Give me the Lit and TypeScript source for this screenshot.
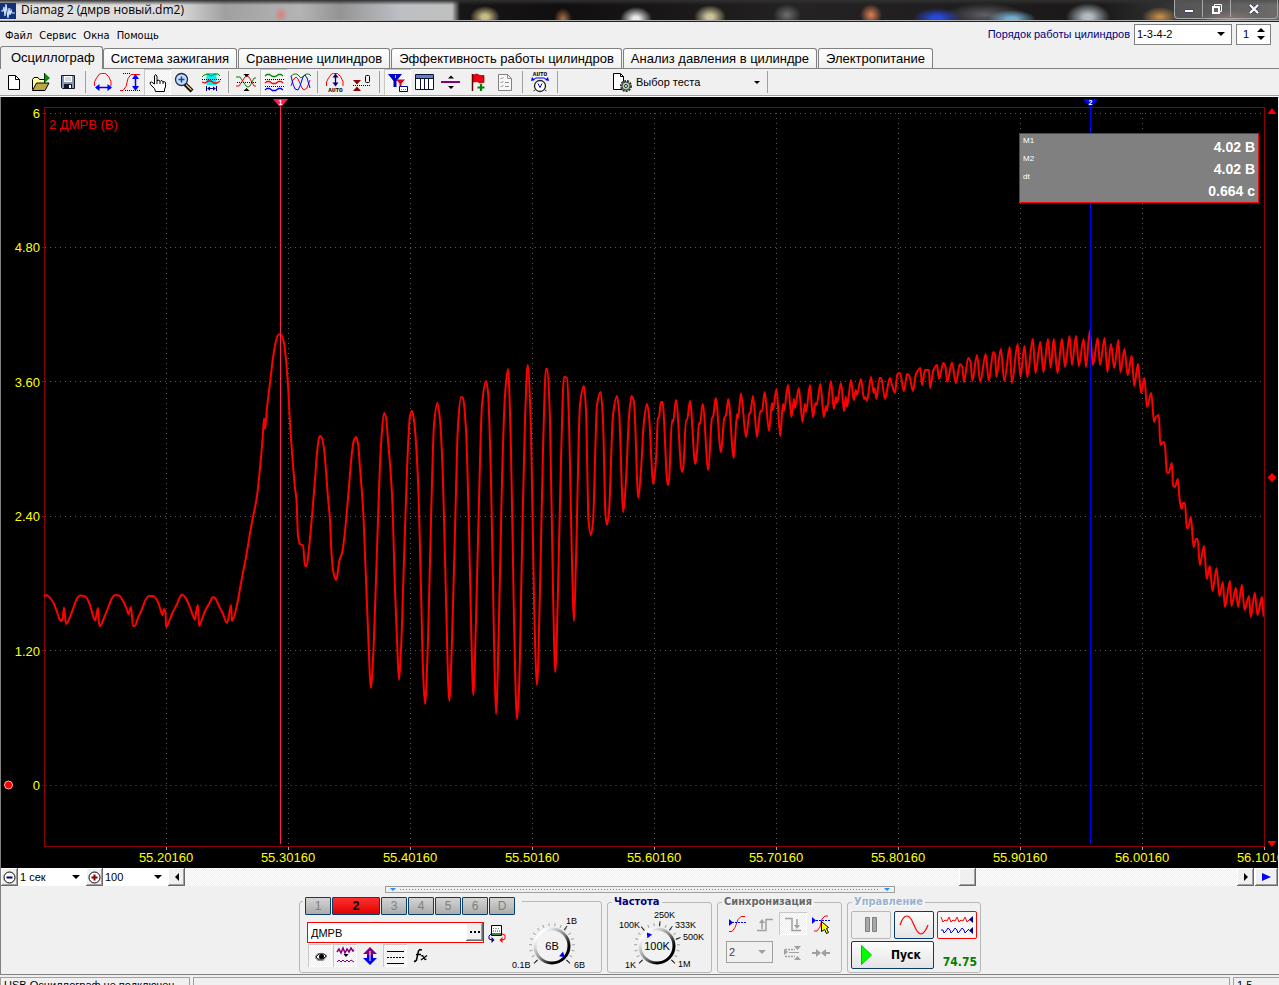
import { LitElement, html, svg, css } from "lit";
import { customElement, property } from "lit/decorators.js";
import { classMap } from "lit/directives/class-map.js";

/* ---------- signal ---------- */

// Sample turning points, x/y pairs in the plot's own coordinate space.
const SIGNAL: number[] = [
  44,596, 46,595, 48,596, 51,599, 54,604, 57,612, 59.5,619, 61,621, 62.5,619, 64,607.5, 66,624, 69,619, 73,609, 77,598.5, 80,595.5,
  84,596, 87,598.5, 90,605, 93,616, 95,620.5, 96,617, 98,608, 99,623, 100,626, 104,618, 108,608, 112,598, 115,595, 119,595.5,
  123,601, 127,610, 128.5,614, 131,607, 133,626, 134.5,626, 138,618, 142,609, 146,599, 149,596, 153,596, 157,600, 160,608,
  162.5,615, 164,609, 165.5,612, 166,627, 168,624, 172,614, 177,604, 180,597, 182,594.5, 185,597, 189,605, 192,613, 195,619.5,
  196.5,610, 198,605, 199,626, 201,622, 205,611, 210,602, 213,597, 215,598, 219,606, 223,614, 227,623, 228.5,618, 231,605,
  232,621, 234,617, 238,600, 241,583, 246,557, 252,522, 257,496, 260,468, 262.5,440, 264,418.5, 265,429, 267,408, 270,383,
  273,358, 276,341, 278.5,334.5, 281,334.5, 284,343, 286,360, 288,385, 290,423, 292,452, 295,488, 296.5,500, 298,536, 300,544,
  303,545.5, 305,566, 306.5,566, 309,548, 312,516, 315,480, 317,453, 319,438, 320,436, 322,438, 324,449, 326,471, 328,498,
  330,520, 331.5,553, 333,570, 336,580, 337,577, 339.5,560, 342,553, 344,540, 347,510, 350,474, 352,452, 354,440, 356,437,
  358,443, 360,468, 363,508, 366,580, 368,630, 371,688, 373,660, 376,580, 379,490, 381,445, 384,413, 386,417, 388,440, 392,494,
  395,590, 397,640, 399,680, 401,650, 404,560, 407,470, 410,416, 412,411, 414,420, 418,480, 421,590, 423,670, 425,704, 428,640,
  431,520, 434,425, 437.3,403, 440,420, 443,480, 446,600, 449.3,701, 452,640, 455,530, 458,425, 461,397, 463,398, 466,430,
  469,530, 471,620, 473.3,695, 476,620, 479,500, 482,405, 486,381, 488,392, 491,480, 494,640, 496,714, 499,620, 502,480,
  505,395, 508,369, 511,450, 514,620, 517,719, 519,690, 522,550, 525,420, 527.7,365, 531,430, 534,600, 537,685, 540,590,
  543,450, 546,369, 547.5,369, 550,420, 553,590, 555.3,672, 558,590, 561,460, 564,377, 567,378, 569,420, 571.5,540, 574,621,
  576,560, 580,405, 584,386, 586,410, 588.5,520, 591,535, 593,522, 597,405, 600.7,392, 603,420, 605.5,515, 607,525, 609,512,
  613,415, 617,396, 619,410, 623.3,512, 626,480, 629,417, 631.5,396, 634,402, 638.3,498, 641,470, 644,421, 647,404, 649,416,
  653.3,484, 656,460, 658,418, 659,417, 661,402, 662.5,402, 667.7,485, 669,480, 672,420, 673,422, 676,400, 682,472, 683.5,465,
  686,420, 687,420, 690,401, 695.3,464, 697,452, 699,423, 700,424, 702.7,404, 708.3,470, 712,418, 713,417, 715.7,398, 721,452,
  724.3,418, 726,415, 728.3,399, 733.7,458, 737,414, 738,418, 741,393.5, 746,437, 749.3,414, 750.5,412, 753,396, 757,437,
  760.3,411, 762,411, 764.7,392, 769,431, 772,403, 772.8,410, 776.5,389, 780.2,436, 783,404, 784,411, 788,385, 791.5,417,
  794,399, 795,408, 798.8,388, 802.5,422, 805,404, 806,412, 810,385, 812.9,417, 815.6,403, 816.6,405, 820.4,384, 823.8,417,
  826,406, 826.8,411, 831,381, 833.8,409, 836,397, 837,403, 841,383, 844,411, 845.8,397, 847,407, 851,380, 853.7,400,
  855.8,390, 856.8,395, 861,379, 864,399, 865.3,397, 867,401, 871,377, 873.7,393, 874.7,388, 876.4,399, 879.5,378, 881.2,378,
  885,399, 889.8,378, 892,385, 895,393, 897.4,374, 899.8,373, 904,391, 907,374, 909.4,376, 912.9,391, 916,374, 920.4,368,
  922,385, 925,370, 929,370, 930,388, 933.5,370, 937,365, 939,379, 943.4,363, 945.5,367, 947.2,382, 952,362.5, 955.8,383,
  960,364, 962.3,367, 964,382, 968.2,358, 970.6,362, 972.3,381, 977,355, 980.2,382, 985.7,354, 988.8,381, 993.3,352, 995,355,
  996.4,377, 1000.8,349, 1004.3,381, 1009.8,347, 1011.8,383, 1017.7,344, 1020.4,377, 1024.5,346, 1027.3,377, 1032.8,339,
  1035.5,373, 1040.3,342, 1043.4,372, 1048,339, 1050.7,368, 1053.7,339, 1057.5,373, 1062,339, 1065,367, 1069.6,336, 1072,365,
  1076,336, 1078.8,366, 1083.6,339, 1086,367, 1089.8,331, 1093,365, 1097.7,338, 1100,365, 1104.6,338, 1107.4,372, 1111,344,
  1114.2,368, 1118.4,340, 1120.4,372, 1124.5,349, 1127.6,375, 1131.8,356, 1134.2,386, 1138,364, 1141,393, 1144.5,378,
  1146.9,407, 1151.3,393, 1154,422, 1156,417, 1158.9,415, 1160.3,445, 1163.4,442, 1165,446, 1166.8,472, 1168.5,473, 1172,463,
  1173,485, 1175,487, 1177.8,479, 1179.9,502, 1181.6,509, 1183,503, 1185,503, 1186.7,528, 1188,528, 1190.9,517, 1193.6,547,
  1196,539, 1197.7,539, 1199.8,565, 1204,546, 1206.7,579, 1209.8,566, 1212.5,591, 1216.6,568, 1219.4,596, 1222.8,582,
  1224.9,607, 1230,581, 1231.4,606, 1235.9,588, 1238,607, 1242,585, 1244.5,610, 1249,596, 1250.7,617, 1254.8,593, 1257.5,615,
  1262,597, 1263.7,617,
];

// Monotone cubic path: flat at every crest and trough, no overshoot between.
function smoothPath(flat: number[]): string {
  const n = flat.length / 2;
  const px = (i: number) => flat[2 * i];
  const py = (i: number) => flat[2 * i + 1];
  const slope = (i: number) => (py(i + 1) - py(i)) / (px(i + 1) - px(i));
  const tangent = (i: number) => {
    if (i === 0 || i === n - 1) return 0;
    const a = slope(i - 1);
    const b = slope(i);
    return a * b <= 0 ? 0 : (2 * a * b) / (a + b);
  };
  let d = `M${px(0)} ${py(0)}`;
  for (let i = 0; i < n - 1; i++) {
    const h = (px(i + 1) - px(i)) / 3;
    d += `C${(px(i) + h).toFixed(1)} ${(py(i) + h * tangent(i)).toFixed(1)} ${(px(i + 1) - h).toFixed(1)} ${(
      py(i + 1) - h * tangent(i + 1)
    ).toFixed(1)} ${px(i + 1)} ${py(i + 1)}`;
  }
  return d;
}

const pct = (v: number) => `${(v * 100).toFixed(3)}%`;
const Y_TICKS = ["6", "4.80", "3.60", "2.40", "1.20", "0"];
const X_TICKS = [
  "55.20160", "55.30160", "55.40160", "55.50160", "55.60160",
  "55.70160", "55.80160", "55.90160", "56.00160", "56.10160",
];

@customElement("scope-chart")
export class ScopeChart extends LitElement {
  static styles = css`
    :host { display: block; position: relative; background: #000; overflow: hidden; }
    .canvas { position: absolute; inset: 0; width: 100%; height: 100%; font: 13px "Liberation Sans", sans-serif; }
    .plot { width: calc(100% - 57px); height: calc(100% - 32px); overflow: visible; }
    .crisp { shape-rendering: crispEdges; }
    .frame { fill: none; stroke: #8b0000; }
    .grid { stroke: #5a5a5a; stroke-dasharray: 1 4; }
    .zero { stroke: #8b0000; stroke-dasharray: 2 3; }
    .tick { stroke: #8b0000; }
    .xtick { stroke: #a0a0a0; }
    .axis { fill: #ff0; }
    .name { fill: #e80000; }
    .wave { fill: none; stroke: #f00; stroke-width: 2; stroke-linejoin: round; vector-effect: non-scaling-stroke; }
    .m1 { fill: #ff2058; }
    .m2 { fill: #00f; }
    .flag { font: bold 7px "Liberation Sans", sans-serif; fill: #fff; text-anchor: middle; }
    .readout {
      position: absolute; top: 36px; right: 19px; width: 240px; height: 70px; box-sizing: border-box;
      display: flex; justify-content: space-between; padding: 2px 3px;
      background: #808080; border: 1px solid #f00; color: #fff; font-family: "Liberation Sans", sans-serif;
    }
    .names { font-size: 8px; line-height: 18px; margin-top: -4px; }
    .values { font-size: 14px; font-weight: bold; line-height: 22px; text-align: right; }
  `;

  render() {
    const yOf = (i: number) => pct((6 + i * 134.4) / 739);
    const marker = (n: string, at: number) => svg`
      <svg x=${pct(at / 1220)} width="1" height="100%" overflow="visible">
        <rect class="m${n} crisp" x="0" y="-2" width="1" height="100%" />
        <path class="m${n}" d="M-7-8H8L2-1h-3z" />
        <text class="flag" x="0.500" y="-2">${n}</text>
      </svg>`;
    return html`
      <svg class="canvas">
        <circle cx="7.5" cy="688" r="4" fill="#f00" stroke="#ffb0b0" />
        <svg class="plot" x="43" y="10">
          <g class="crisp">
            ${X_TICKS.map((_, i) => svg`
              <line class="grid" x1=${pct((i + 1) / 10)} x2=${pct((i + 1) / 10)} y1="6" y2="100%" />`)}
            ${Y_TICKS.map((t, i) => svg`
              <line class=${t === "0" ? "zero" : "grid"} x1="1" x2="100%" y1=${yOf(i)} y2=${yOf(i)} />
              <line class="tick" x1="-2" x2="0" y1=${yOf(i)} y2=${yOf(i)} />`)}
            <rect class="frame" x="0" y="0" width="100%" height="100%" />
          </g>
          ${Y_TICKS.map((t, i) => svg`<text class="axis" x="-4" y=${yOf(i)} dy="5" text-anchor="end">${t}</text>`)}
          ${X_TICKS.map((t, i) => svg`
            <svg x=${pct((i + 1) / 10)} y="100%" overflow="visible">
              <line class="xtick crisp" x1="0" x2="0" y1="1" y2="4" />
              <text class="axis" x="0" y="16" text-anchor="middle">${t}</text>
            </svg>`)}
          <text class="name" x="5" y="22">2 ДМРВ (В)</text>
          <svg width="100%" height="100%" viewBox="44 107 1220 739" preserveAspectRatio="none">
            <path class="wave" d=${smoothPath(SIGNAL)} />
          </svg>
          ${marker("1", 236)} ${marker("2", 1046)}
          <svg x="100%" y="0" overflow="visible"><path d="M3.500 7l4.500-6 4.500 6z" fill="#f00" /></svg>
          <svg x="100%" y="50%" overflow="visible"><path d="M3.500 1L8-3.500 12.500 1 8 5.500z" fill="#f00" /></svg>
          <svg x="100%" y="100%" overflow="visible"><path d="M3.500-5l4.500 6 4.500-6z" fill="#f00" /></svg>
        </svg>
      </svg>
      <div class="readout">
        <div class="names"><div>M1</div><div>M2</div><div>dt</div></div>
        <div class="values"><div>4.02 В</div><div>4.02 В</div><div>0.664 с</div></div>
      </div>
    `;
  }
}

/* ---------- knob ---------- */

type Mark = { angle: number; text: string; x: number; y: number };

@customElement("scope-knob")
export class ScopeKnob extends LitElement {
  @property({ attribute: false }) marks: Mark[] = [];
  @property() value = "";
  @property() label = "";
  @property({ type: Number }) pointer = 0;

  static styles = css`
    :host { display: block; width: 98px; height: 62px; }
    .dial { display: block; width: 100%; height: 100%; overflow: visible; font: 9px "Liberation Sans", sans-serif; }
    .value { font-size: 11px; text-anchor: middle; }
  `;

  render() {
    const minors = Array.from({ length: 18 }, (_, i) => 136 + (i * 268) / 17);
    return html`
      <svg class="dial" viewBox="-49 -38 98 62" role="slider" aria-label=${this.label} aria-valuetext=${this.value}>
        <defs>
          <linearGradient id="rim" x1="0.15" y1="0.15" x2="0.85" y2="0.85">
            <stop offset="0" stop-color="#fff" /><stop offset="0.5" stop-color="#8a8a8a" /><stop offset="0.85" stop-color="#000" />
          </linearGradient>
        </defs>
        ${minors.map((a) => svg`<line x1="20" x2="23" transform="rotate(${a})" stroke="#a0a0a0" />`)}
        ${this.marks.map((m) => svg`
          <line x1="20" x2="25" transform="rotate(${m.angle})" stroke="#202020" />
          <text x=${m.x} y=${m.y}>${m.text}</text>`)}
        <circle r="17" fill="#f2f2f2" stroke="url(#rim)" stroke-width="3" />
        <path d="M17 0l-5-3v6z" fill="#00f" transform="rotate(${this.pointer})" />
        <text class="value" y="4">${this.value}</text>
      </svg>
    `;
  }
}

/* ---------- icons ---------- */

// One gentle wave across a toolbar icon.
const wave = (y: number, c: string) =>
  svg`<path d="M5 ${y + 1}l2-1.500h2.500l3 2h3l3-2H21l2 1.500" fill="none" stroke=${c} stroke-width="1.300" />`;
const dots = (x1: number, x2: number, y: number) =>
  svg`<path d="M${x1} ${y}H${x2}" stroke="#000" stroke-dasharray="1 1" />`;

const TOOL_ICONS: Record<string, unknown> = {
  new: svg`<path d="M7.500 6.500h7l4 4v10h-11z" fill="#fff" stroke="#000" /><path d="M14.500 6.500v4h4" fill="none" stroke="#000" />`,
  open: svg`<path d="M4.500 20.500v-10l1.500-2h4l1.500 2h5v4" fill="#ffffa0" stroke="#000" /><path d="M4.500 21.500l4-7.500h12.500l-4 7.500z" fill="#b8a848" stroke="#000" /><path d="M16.500 4l5.500 5-5.500 5z" fill="#0a8a0a" /><path d="M16.500 4v10" stroke="#003c00" />`,
  save: svg`<path d="M6.500 6.500h13v13h-12l-1-1z" fill="#8a96b8" stroke="#101828" /><path d="M9 7h8v6H9z" fill="#fff" /><path d="M10 9h6M10 11h6" stroke="#b0b0c0" /><path d="M9 15h8v5H9z" fill="#101828" /><path d="M14 16h2v3h-2z" fill="#fff" />`,
  period: svg`<path d="M4.500 17v-4l2-4 3-4 2-.5h4l3 3 2.500 5V17" fill="none" stroke="#f00" /><path d="M6 18.500h15" stroke="#00f" stroke-width="1.500" /><path d="M9.500 15v7L5 18.500zM17.500 15v7l4.500-3.500z" fill="#00f" />`,
  edge: svg`<path d="M3 21.500h3l3-4 2-8 3-4h9" fill="none" stroke="#f00" />${dots(6, 14, 4.5)}${dots(8, 23, 21.5)}<path d="M18.500 7v13" stroke="#00f" stroke-width="1.500" /><path d="M15 10l3.500-5 3.500 5zM15 17l3.500 5 3.500-5z" fill="#00f" />`,
  hand: svg`<path d="M11.500 22.500l-1-3-4-4-.5-2 1.500-.5 3 2V7l1-1.500L13 7v5l1-1 1.500.5.500 1 1-1 1.500.5.500 1 1-.5 1.500 1V18l-1 2v2.500z" fill="#fff" stroke="#000" /><path d="M13 12v3M16 12.500V15M19 13v2" stroke="#000" />`,
  lens: svg`<path d="M14 15l7 7" stroke="#000" stroke-width="4" /><path d="M15 15.500l5.500 5.500" stroke="#f0c070" stroke-width="1.500" /><circle cx="10.500" cy="10.500" r="6" fill="#c4dcf8" stroke="#1c3050" stroke-width="1.300" /><path d="M10.500 7.500v6M7.500 10.500h6" stroke="#1040c0" stroke-width="1.500" />`,
  window: svg`<path d="M8.500 4h10v12h-10z" fill="#00f0f8" />${dots(4, 23, 10.5)}<path d="M4 8l2-2 4-1 3 2 4-2h3l2 2" fill="none" stroke="#080" /><path d="M4 13l3 1 3-2h3l3 2h3l3-2" fill="none" stroke="#f00" stroke-width="1.300" /><path d="M8.500 17v5M18.500 17v5M10 19.500h7" stroke="#000080" /><path d="M12 17.500v4L9 19.500zM15 17.500v4l3-2z" fill="#000080" />`,
  cross: svg`<path d="M3 8h4l6 9 2 1 2-1 4-8h2" fill="none" stroke="#080" /><path d="M3 17h3l6-9 2-1 2 1 5 9h2" fill="none" stroke="#f00" />${dots(4, 23, 13.5)}<path d="M10.500 5h6l-3 3zM10.500 22h6l-3-3z" fill="#000" />`,
  stack: svg`${wave(6, "#080")}${dots(5, 24, 10.5)}${wave(13, "#f00")}${dots(5, 24, 17.5)}${wave(20, "#00f")}`,
  overlay: svg`<path d="M4 7l3-2h3l4 4 5-4h3l2 2" fill="none" stroke="#080" /><path d="M4 17l2-6 3-3 2 2 4 9 2 2 3-2 3-8" fill="none" stroke="#f00" /><path d="M4 7l2 8 2 5 3 1 2-4 3-9 2-2 2 3 3 10" fill="none" stroke="#00f" />`,
  auto: svg`<path d="M4.500 17v-4l2-4 3-4 2-.5h4l3 3 2.500 5V17" fill="none" stroke="#f00" /><path d="M13.500 6v9" stroke="#000080" stroke-width="1.300" /><path d="M10.500 8.500l3-4 3 4zM10.500 13.500l3 4 3-4z" fill="#000080" /><text class="pix" x="13.500" y="22.500">AUTO</text>`,
  zero: svg`<path d="M4 11h8l-4 4.500z" fill="#8b0000" /><path d="M4 22h8l-4-4.500z" fill="#8b0000" />${dots(4, 22, 16.5)}<rect x="16.500" y="6.500" width="4" height="7" rx="1" fill="none" stroke="#000" />`,
  funnel: svg`<path d="M4 5h14l-5.500 7v6h-3v-6z" fill="#00c" /><path d="M11.500 6v3" stroke="#a0c0ff" /><path d="M12 10.500h9l-3.500 4v3h-2v-3z" fill="#e00020" /><path d="M15.500 17.500h8v5h-8z" fill="#fff" stroke="#000080" /><path d="M17 20.500h5" stroke="#808080" stroke-dasharray="1 1" />`,
  table: svg`<path d="M4.500 5.500h18v15h-18z" fill="#fff" stroke="#101030" /><path d="M5 6h17v3H5z" fill="#6080c0" /><path d="M4.500 9.500h18M9.500 9v11M13.500 9v11M17.500 9v11" stroke="#101030" />`,
  level: svg`<path d="M3 13h19" stroke="#800080" stroke-width="2" /><path d="M10 9.500h6l-3-3zM10 17h6l-3 3z" fill="#000" />`,
  flag: svg`<path d="M7.500 5v17" stroke="#600000" stroke-width="1.500" /><path d="M8 6l4-1 3 1.500h4v7l-4 .5-3-1.500-4 .5z" fill="#f00010" stroke="#700" stroke-width=".7" /><path d="M16 15v7M12.500 18.500h7" stroke="#008000" stroke-width="2.200" />`,
  check: svg`<path d="M6.500 5.500h9l4 4v12h-13z" fill="#f8f8f8" stroke="#808080" /><path d="M15.500 5.500v4h4M8.500 9l1 1 2-2M8.500 13l1 1 2-2M8.500 17l1 1 2-2M13 13.500h4M13 17.500h4" fill="none" stroke="#909090" />`,
  autov: svg`<text class="pix" x="13" y="7">AUTO</text><path d="M6 11l3-2h8l3 2" fill="none" stroke="#00f" /><path d="M4 12l1-4 3 3zM22 12l-1-4-3 3z" fill="#00f" /><circle cx="13" cy="17" r="5.500" fill="#fff" stroke="#222" stroke-width="1.300" /><path d="M8 21l-1.500 1M18 21l1.500 1" stroke="#222" /><path d="M11 14.500l2 4 2-4" fill="none" stroke="#00f" />`,
};

type Tool = { id: string; title: string; down?: boolean } | null;
const TOOLS: Tool[] = [
  { id: "new", title: "Новый" }, { id: "open", title: "Открыть" }, { id: "save", title: "Сохранить" }, null,
  { id: "period", title: "Период" }, { id: "edge", title: "Размах" }, { id: "hand", title: "Рука", down: true },
  { id: "lens", title: "Лупа" }, { id: "window", title: "Окно" }, null,
  { id: "cross", title: "Совместить" }, { id: "stack", title: "Разделить", down: true }, { id: "overlay", title: "Наложить" }, null,
  { id: "auto", title: "Авто" }, { id: "zero", title: "Ноль" }, null,
  { id: "funnel", title: "Маркеры", down: true }, { id: "table", title: "Таблица" }, { id: "level", title: "Уровень" },
  { id: "flag", title: "Флаг" }, { id: "check", title: "Список" }, null,
  { id: "autov", title: "Автонастройка" }, null,
];

const TABS = [
  "Осциллограф", "Система зажигания", "Сравнение цилиндров",
  "Эффективность работы цилиндров", "Анализ давления в цилиндре", "Электропитание",
];

const VOLT_MARKS: Mark[] = [
  { angle: 136, text: "0.1В", x: -40, y: 22 },
  { angle: -53, text: "1В", x: 14, y: -22 },
  { angle: 44, text: "6В", x: 22, y: 22 },
];
const FREQ_MARKS: Mark[] = [
  { angle: 136, text: "1K", x: -32, y: 22 },
  { angle: 231, text: "100K", x: -38, y: -18 },
  { angle: 277, text: "250K", x: -3, y: -28 },
  { angle: 308, text: "333K", x: 18, y: -18 },
  { angle: 340, text: "500K", x: 26, y: -6 },
  { angle: 44, text: "1M", x: 21, y: 21 },
];

@customElement("app-root")
export class AppRoot extends LitElement {
  static styles = css`
    :host {
      display: flex; flex-direction: column; height: 100vh; overflow: hidden;
      background: #f0f0f0; color: #000; font: 11px "Liberation Sans", Arial, sans-serif;
    }
    * { box-sizing: border-box; }
    button, input, select { font: inherit; color: inherit; margin: 0; padding: 0; border-radius: 0; }
    button { background: none; border: 0; display: grid; place-items: center; }
    svg { display: block; }

    .title {
      flex: none; height: 22px; display: flex; align-items: flex-start; justify-content: space-between;
      border-bottom: 1px solid #202020; box-shadow: inset 0 -1px #b0b0b0;
      background:
        radial-gradient(15px 11px at 485px 17px, #c8bc84 20%, transparent),
        radial-gradient(9px 11px at 563px 19px, #a06840 10%, transparent),
        radial-gradient(16px 12px at 636px 19px, #e8e8e8 20%, transparent),
        radial-gradient(16px 12px at 710px 17px, #ccc498 20%, transparent),
        radial-gradient(14px 11px at 787px 15px, #686868 10%, transparent),
        radial-gradient(11px 11px at 871px 15px, #d07850 10%, transparent),
        radial-gradient(24px 10px at 937px 18px, #2848d8 20%, transparent),
        radial-gradient(24px 9px at 1012px 19px, #70b0d0 20%, transparent),
        radial-gradient(40px 12px at 985px 15px, #606068, transparent),
        radial-gradient(22px 14px at 1088px 17px, #b0b8c0 20%, transparent),
        radial-gradient(18px 10px at 1160px 17px, #c08848 10%, transparent),
        radial-gradient(30px 10px at 1230px 20px, #c08878, transparent),
        radial-gradient(7px 9px at 281px 15px, #d88080, transparent),
        linear-gradient(#303030, transparent 5px),
        linear-gradient(90deg, #e4e4e4 0, #d8d8d8 180px, #a0a0a0 225px, #b4b4b4 300px, #949494 340px, #bcc0c4 400px, #c0c0c0 452px, #181616 460px, #100e0e 560px, #242222 800px, #1a1818 1100px, #383838 1180px, #706864);
    }
    .caption { display: flex; align-items: center; gap: 5px; font: 12px/20px "Open Sans", sans-serif; }
    .winbtns { display: flex; height: 19px; margin-right: 1px; border: 1px solid #a8a8a8; border-top: 0; border-radius: 0 0 4px 4px; background: rgba(110, 110, 112, 0.55); }
    .winbtns button { width: 28px; height: 17px; border-right: 1px solid #a8a8a8; }
    .winbtns .close { width: 46px; border-right: 0; }

    .menubar { flex: none; height: 24px; display: flex; align-items: center; padding: 0 8px 0 5px; }
    .menu { display: flex; gap: 7px; margin: 0; padding: 2px 0 0; flex: 1; font: 11px "DejaVu Sans Condensed", sans-serif; }
    .order { display: flex; align-items: center; gap: 4px; color: #000080; }
    .combo { display: grid; align-items: center; background: #fff; color: #000; }
    .combo > * { grid-area: 1 / 1; }
    .combo::after { content: ""; grid-area: 1 / 1; justify-self: end; margin-right: 6px; border: 4px solid transparent; border-top-color: #000; border-bottom: 0; pointer-events: none; }
    .combo select { appearance: none; border: 0; outline: 0; background: transparent; width: 100%; height: 100%; padding-left: 2px; }
    .boxed { border: 1px solid #808080; height: 21px; }
    .boxed.wide { width: 98px; }
    .boxed.dim { width: 47px; height: 22px; border-color: #a0a0a0; background: #f0f0f0; color: #404040; }
    .boxed.dim::after { border-top-color: #a0a0a0; }
    .spin { display: flex; align-items: center; width: 35px; height: 21px; padding-left: 6px; border: 1px solid #808080; background: #fff; color: #000; }
    .spin input { width: 14px; border: 0; outline: 0; background: none; }
    .spin .arrows { display: grid; gap: 4px; }

    .tabs { flex: none; height: 23px; display: flex; align-items: flex-end; gap: 1px; border-bottom: 1px solid #808080; }
    .tabs button { height: 20px; padding: 0 7px; border: 1px solid #808080; border-bottom: 0; border-radius: 3px 3px 0 0; background: linear-gradient(#fff, #f0f0f0); font-size: 13px; white-space: nowrap; }
    .tabs .on { height: 23px; padding: 0 7px 2px 10px; margin: 0 -1px -1px 0; background: #f0f0f0; }

    .tools { flex: none; height: 28px; display: flex; padding-left: 1px; border-bottom: 1px solid #fff; box-shadow: inset 0 -1px #a0a0a0; }
    .tool { width: 27px; height: 26px; }
    .down { background: repeating-conic-gradient(#fff 0 25%, #ececec 0 50%) 0 0 / 2px 2px; box-shadow: inset 1px 1px #c8c8c8, inset -1px -1px #fff; }
    .pix { font: bold 6px "Liberation Mono", monospace; text-anchor: middle; }
    .sep { width: 8px; padding: 2px 0 2px 3px; }
    .sep::before { content: ""; display: block; width: 1px; height: 22px; background: #a0a0a0; }
    .test { display: flex; align-items: center; width: 202px; padding-left: 50px; gap: 3px; height: 26px; }
    .test .drop { margin: 0 4px 0 auto; }

    .page { flex: 1; min-height: 0; display: flex; flex-direction: column; border-left: 1px solid #808080; border-bottom: 1px solid #808080; }
    scope-chart { flex: 1; min-height: 0; margin-right: 1px; }

    .strip { flex: none; height: 18px; display: flex; background: #fff; }
    .raised { background: #f0f0f0; width: 17px; height: 18px; box-shadow: inset -1px -1px #696969, inset 1px 1px #fff, inset -2px -2px #a0a0a0; }
    .strip .scale { width: 68px; }
    .strip .percent { width: 65px; }
    .scroll { appearance: none; flex: 1; min-width: 0; height: 18px; background: repeating-conic-gradient(#fff 0 25%, #efefef 0 50%) 0 0 / 2px 2px; }
    .scroll::-webkit-slider-thumb { appearance: none; width: 17px; height: 18px; background: #f0f0f0; box-shadow: inset -1px -1px #696969, inset 1px 1px #fff, inset -2px -2px #a0a0a0; }
    .run { width: 23px; margin: 0 1px; }

    .panel { flex: none; height: 88px; display: flex; flex-direction: column; align-items: center; }
    .split { width: 510px; max-width: 100%; height: 7px; flex: none; display: flex; align-items: center; padding: 0 4px; gap: 4px; border: 1px solid #a0a0a0; }
    .split::before, .split::after { content: ""; border: 3px solid transparent; border-top-color: #1e90ff; border-bottom: 0; }
    .split i { flex: 1; height: 1px; background: repeating-linear-gradient(90deg, #1e90ff 0 1px, transparent 1px 3px); }
    .groups { display: flex; gap: 5px; align-items: flex-start; margin-top: 3px; }
    fieldset { margin: 0; padding: 0; min-width: 0; height: 77px; border: 1px solid #b8b8b8; border-radius: 3px; }
    legend { margin-left: 4px; padding: 0 2px; font: bold 11px/12px "DejaVu Sans", sans-serif; }
    .freq { width: 105px; }
    .freq legend { color: #000080; }
    .sync { width: 125px; }
    .sync legend { color: #686868; text-shadow: 1px 1px #fff; font-family: "DejaVu Sans Condensed", sans-serif; }
    .ctl { width: 134px; }
    .ctl legend { color: #9ab2d0; text-shadow: 1px 1px #fff; font-family: "DejaVu Sans Condensed", sans-serif; }
    .freq legend { font-family: "DejaVu Sans Condensed", sans-serif; }

    .input { width: 303px; height: 72px; margin-top: 5px; display: flex; justify-content: space-between; border: 1px solid #b8b8b8; border-radius: 3px; padding-left: 3px; }
    .side { width: 219px; margin-top: -5px; background: #f0f0f0; height: 74px; }
    .chans { display: flex; gap: 1px; padding-left: 2px; }
    .chans button { width: 26px; height: 18px; border: 1px solid #0a3c6c; background: linear-gradient(#d4d4d4, #acacac); color: #808080; font-size: 12px; border-radius: 1px; }
    .chans .on { width: 48px; background: linear-gradient(#ff3030, #e00000); color: #000; font-weight: bold; }
    .src { display: flex; align-items: center; gap: 4px; padding: 7px 0 0 4px; }
    .field { display: flex; width: 177px; height: 21px; border: 1px solid #f00; background: #fff; }
    .field input { flex: 1; min-width: 0; border: 0; outline: 0; padding-left: 3px; background: none; }
    .opts { display: flex; gap: 1px; padding: 1px 0 0 5px; }
    .opts button { width: 24px; height: 23px; }
    .input scope-knob { margin: 6px 0 0 -19px; }
    .freq scope-knob { margin-top: 0; }

    .syncgrid { display: grid; grid-template-columns: repeat(4, 28px); padding: 4px 0 0 5px; row-gap: 6px; }
    .syncgrid button { width: 28px; height: 23px; }
    .syncgrid .boxed { grid-column: span 2; margin-left: 3px; }
    .ctlgrid { display: grid; grid-template-columns: repeat(3, 40px); gap: 2px 3px; padding: 3px 0 0 3px; }
    .ctlgrid button { height: 28px; border: 1px solid #0a3c6c; border-radius: 2px; background: linear-gradient(#fdfdfd, #e4e4e4); }
    .ctlgrid .off { border-color: #b8b8b8; background: #f0f0f0; }
    .ctlgrid .red { border-color: #f00; background: #f8f8f8; }
    .ctlgrid .go { grid-column: span 2; display: flex; align-items: center; gap: 19px; padding-left: 9px; font: bold 12px "DejaVu Sans Condensed", sans-serif; }
    .rate { align-self: end; justify-self: end; font: bold 12px/14px "DejaVu Sans Condensed", sans-serif; color: #008000; }

    .status { flex: none; height: 10px; display: flex; gap: 3px; padding-top: 2px; overflow: hidden; }
    .status div { height: 20px; border: 1px solid #a0a0a0; border-width: 1px 0 0 1px; padding: 1px 0 0 3px; line-height: 12px; }
    .status .usb { width: 190px; border-right-width: 1px; }
    .status .mid { flex: 1; border-right-width: 1px; }
    .status .ver { width: 46px; }
  `;

  private renderTool(t: Tool) {
    if (!t) return html`<span class="sep"></span>`;
    return html`<button class=${classMap({ tool: true, down: !!t.down })} title=${t.title} aria-label=${t.title}>
      <svg width="27" height="26">${TOOL_ICONS[t.id]}</svg>
    </button>`;
  }

  private renderInputGroup() {
    return html`<div class="input">
      <div class="side">
        <div class="chans">
          ${["1", "2", "3", "4", "5", "6", "D"].map((c) => html`<button class=${classMap({ on: c === "2" })}>${c}</button>`)}
        </div>
        <div class="src">
          <div class="field">
            <input aria-label="Канал" value="ДМРВ" />
            <button class="raised" aria-label="Выбрать"><svg width="10" height="4"><path d="M0 1h2v2H0zM4 1h2v2H4zM8 1h2v2H8z" /></svg></button>
          </div>
          <button aria-label="Прибор">
            <svg width="18" height="20">
              <path d="M3.500 2.500h10v10h-10z" fill="#fff" stroke="#000" /><path d="M5 8h7M5 5l1 1M8 5v2M11 5l-1 1" stroke="#444" stroke-dasharray="1 1" />
              <path d="M4 10h9v2H4z" fill="#3a8a3a" />
              <path d="M3 11L1 13v3l3 1" fill="none" stroke="#000080" /><path d="M3.500 14l3 3-3 3z" fill="#000080" />
              <path d="M14 11l3 1v4l-3 1" fill="none" stroke="#f00" /><path d="M14.500 14l-3 3 3 3z" fill="#f00" />
            </svg>
          </button>
        </div>
        <div class="opts">
          <button class="down" aria-label="Видимость">
            <svg width="24" height="23"><path d="M7 12l3-3h5l4 2v2l-4 4H10l-3-3z" fill="#909080" /><path d="M8 13l3-3h5l2 2-3 3h-5z" fill="#fff" stroke="#222" /><circle cx="13.500" cy="12.500" r="2.500" /></svg>
          </button>
          <button class="down" aria-label="Фильтр">
            <svg width="24" height="23"><path d="M4 8l2-3 2 4 2-5 2 5 2-4 2 3 2-4 2 3 1-1" fill="none" stroke="#800080" stroke-width="1.500" /><path d="M10.500 10h5l-2.500 3z" /><path d="M4 18l2-2 2 2 2-2 2 2 2-2 2 2 2-2 3 2" fill="none" stroke="#800080" /></svg>
          </button>
          <button aria-label="Инверсия">
            <svg width="24" height="23"><path d="M12 3l7 7h-4v2H9v-2H5z" fill="#800080" /><path d="M12 21l7-7h-4v-3H9v3H5z" fill="#00f" /><path d="M12 7v10" stroke="#fff" /></svg>
          </button>
          <button class="down" aria-label="Уровни">
            <svg width="24" height="23"><path d="M4 7.500h17M4 19.500h17" stroke="#000" /><path d="M4 13.500h17" stroke="#000" stroke-dasharray="2 1" /></svg>
          </button>
          <button aria-label="Функция">
            <svg width="24" height="23"><path d="M14 6l-2-.5-1.500 1.500L8.500 16 7 17.500 6 17M8 10.500h5" fill="none" stroke="#000" stroke-width="1.500" /><path d="M13 12l1.500-.5 2.500 4 1.500-.5M19 11.500L13 16" fill="none" stroke="#000" stroke-width="1.300" /></svg>
          </button>
        </div>
      </div>
      <scope-knob label="Диапазон" value="6В" .marks=${VOLT_MARKS} .pointer=${41}></scope-knob>
    </div>`;
  }

  private renderSync() {
    return html`<fieldset class="sync">
      <legend>Синхронизация</legend>
      <div class="syncgrid">
        <button aria-label="Уровень"><svg width="20" height="20"><path d="M2 17.500h3l3-4 3-8 3-3h4" fill="none" stroke="#f00" /><path d="M2 8.500h17" stroke="#00f" stroke-dasharray="2 1" /><path d="M2 5v7l4-3.500z" fill="#00f" /></svg></button>
        <button aria-label="Фронт"><svg width="20" height="20"><path d="M2 16.500h9v-11h7" fill="none" stroke="#a0a0a0" stroke-width="1.500" /><path d="M7 7v8" stroke="#a0a0a0" stroke-width="1.500" /><path d="M4 9l3-4 3 4z" fill="#a0a0a0" /></svg></button>
        <button class="down" aria-label="Спад"><svg width="20" height="20"><path d="M2 4.500h7v12h9" fill="none" stroke="#a0a0a0" stroke-width="1.500" /><path d="M14 5v8" stroke="#a0a0a0" stroke-width="1.500" /><path d="M11 11l3 4 3-4z" fill="#a0a0a0" /></svg></button>
        <button aria-label="Захват"><svg width="20" height="20"><path d="M3 17h3l3-4 2-8 3-3h3" fill="none" stroke="#f00" /><path d="M2 6.500h17" stroke="#00f" stroke-dasharray="2 1" /><path d="M1 3v7l4-3.500z" fill="#00f" /><path d="M10.500 7.500l7 6-2 1 2 4-2 1-2-4-3 2z" fill="#ff0" stroke="#000" /></svg></button>
        <label class="combo boxed dim"><select aria-label="Канал синхронизации"><option>2</option></select></label>
        <button aria-label="Порог"><svg width="20" height="20"><path d="M2 6.500h10M2 13.500h10" stroke="#a0a0a0" stroke-width="1.500" stroke-dasharray="2 1" /><path d="M11 3h7l-3.500 4zM11 17h7l-3.500-4z" fill="#a0a0a0" /><path d="M1 6v6l4-3z" fill="#a0a0a0" /><path d="M6 9.500h10" stroke="#a0a0a0" /></svg></button>
        <button aria-label="Сжать"><svg width="20" height="20"><path d="M1 10h6M13 10h6" stroke="#a0a0a0" stroke-width="2" /><path d="M5 6v8l5-4zM15 6v8l-5-4z" fill="#a0a0a0" /></svg></button>
      </div>
    </fieldset>`;
  }

  private renderControl() {
    return html`<fieldset class="ctl">
      <legend>Управление</legend>
      <div class="ctlgrid">
        <button class="off" aria-label="Пауза"><svg width="12" height="16"><path d="M.5.500h4v14h-4zM7.500.500h4v14h-4z" fill="#a8a8a8" stroke="#808080" /></svg></button>
        <button aria-label="Однократно"><svg width="30" height="22"><path d="M1 11c2-6 4-9 7-9s5 4 7 9 4 9 7 9 5-4 7-9" fill="none" stroke="#f00" stroke-width="1.200" /></svg></button>
        <button class="red" aria-label="Непрерывно"><svg width="34" height="22">
          <path d="M1 3l2 5 2-2 2 1 2-4 2 5 2-2 2 1 2-4 2 5 2-2 2 1 2-4 2 5 2-2 1 0" fill="none" stroke="#f00" />
          <path d="M1 16h2l1 3 2-2 2-3 2 2 1 3 2-2 2-3 2 2 1 3 2-2 2-3 2 2 1 3 2-2 2-2" fill="none" stroke="#00f" />
          <path d="M33 2v7l-4-3.500zM33 13v7l-4-3.500z" fill="#000080" /></svg></button>
        <button class="go"><svg width="11" height="20"><path d="M.5.500l10 9.500-10 9.500z" fill="#0f0" stroke="#00c000" /></svg>Пуск</button>
        <output class="rate">74.75</output>
      </div>
    </fieldset>`;
  }

  render() {
    const drop = svg`<path d="M0 0h6L3 3z" />`;
    return html`
      <header class="title">
        <div class="caption">
          <svg width="16" height="20"><path d="M0 3h16v16H0z" fill="#12307c" /><path d="M1 11h2l1-4 1 9 1-12 2 14 1-10 1 7 1-5 1 3h3" fill="none" stroke="#d0e4ff" stroke-width="1.200" /></svg>
          <span>Diamag 2 (дмрв новый.dm2)</span>
        </div>
        <div class="winbtns">
          <button aria-label="Свернуть"><svg width="12" height="10"><path d="M1.500 5.500h9v3h-9z" fill="#fff" stroke="#404858" /></svg></button>
          <button aria-label="Развернуть"><svg width="12" height="12"><path d="M3.500 1.500h7v7h-7z" fill="none" stroke="#fff" /><path d="M2 4h6v6H2z" fill="#606470" stroke="#fff" stroke-width="2" /></svg></button>
          <button class="close" aria-label="Закрыть"><svg width="12" height="10"><path d="M2 1l8 8M10 1L2 9" stroke="#404858" stroke-width="4" /><path d="M2 1l8 8M10 1L2 9" stroke="#fff" stroke-width="2.200" /></svg></button>
        </div>
      </header>

      <div class="menubar">
        <nav class="menu"><span>Файл</span><span>Сервис</span><span>Окна</span><span>Помощь</span></nav>
        <div class="order">
          <label for="order">Порядок работы цилиндров</label>
          <span class="combo boxed wide"><select id="order"><option>1-3-4-2</option></select></span>
          <span class="spin">
            <input aria-label="Цилиндр" value="1" />
            <span class="arrows"><svg width="8" height="4"><path d="M0 4h8L4 0z" /></svg><svg width="8" height="4"><path d="M0 0h8L4 4z" /></svg></span>
          </span>
        </div>
      </div>

      <nav class="tabs">${TABS.map((t, i) => html`<button class=${classMap({ on: i === 0 })}>${t}</button>`)}</nav>

      <div class="tools">
        ${TOOLS.map((t) => this.renderTool(t))}
        <button class="test">
          <svg width="21" height="20"><path d="M1.500 1.500h7l3 3v13h-10z" fill="#fff" stroke="#000" /><path d="M8.500 1.500v3h3" fill="none" stroke="#000" /><circle cx="14" cy="14" r="5" fill="#b8ccb8" stroke="#303830" stroke-width="2" stroke-dasharray="2 1" /><circle cx="14" cy="14" r="4" fill="#b8ccb8" stroke="#405040" /><circle cx="14" cy="14" r="1.500" fill="#fff" stroke="#203020" /></svg>
          <span>Выбор теста</span>
          <svg class="drop" width="6" height="3">${drop}</svg>
        </button>
        <span class="sep"></span>
      </div>

      <main class="page">
        <scope-chart></scope-chart>
        <div class="strip">
          <button class="raised" aria-label="Уменьшить"><svg width="15" height="15"><circle cx="7.500" cy="7.500" r="5.500" fill="#fff" stroke="#000" /><path d="M4.500 7.500h6" stroke="#000080" stroke-width="2" /></svg></button>
          <label class="combo scale"><select aria-label="Развертка"><option>1 сек</option></select></label>
          <button class="raised" aria-label="Увеличить"><svg width="15" height="15"><circle cx="7.500" cy="7.500" r="5.500" fill="#fff" stroke="#000" /><path d="M4.500 7.500h6M7.500 4.500v6" stroke="#8b0000" stroke-width="2" /></svg></button>
          <label class="combo percent"><select aria-label="Масштаб"><option>100</option></select></label>
          <button class="raised" aria-label="Влево"><svg width="4" height="8"><path d="M4 0v8L0 4z" /></svg></button>
          <input class="scroll" type="range" aria-label="Прокрутка" min="0" max="1000" value="748" />
          <button class="raised" aria-label="Вправо"><svg width="4" height="8"><path d="M0 0v8l4-4z" /></svg></button>
          <button class="raised run" aria-label="Воспроизвести"><svg width="9" height="8"><path d="M0 0v8l9-4z" fill="#00f" /></svg></button>
        </div>
        <section class="panel">
          <div class="split"><i></i></div>
          <div class="groups">
            ${this.renderInputGroup()}
            <fieldset class="freq">
              <legend>Частота</legend>
              <scope-knob label="Частота" value="100K" .marks=${FREQ_MARKS} .pointer=${233}></scope-knob>
            </fieldset>
            ${this.renderSync()}
            ${this.renderControl()}
          </div>
        </section>
      </main>

      <footer class="status">
        <div class="usb">USB Осциллограф не подключен</div>
        <div class="mid"></div>
        <div class="ver">1.5</div>
      </footer>
    `;
  }
}
